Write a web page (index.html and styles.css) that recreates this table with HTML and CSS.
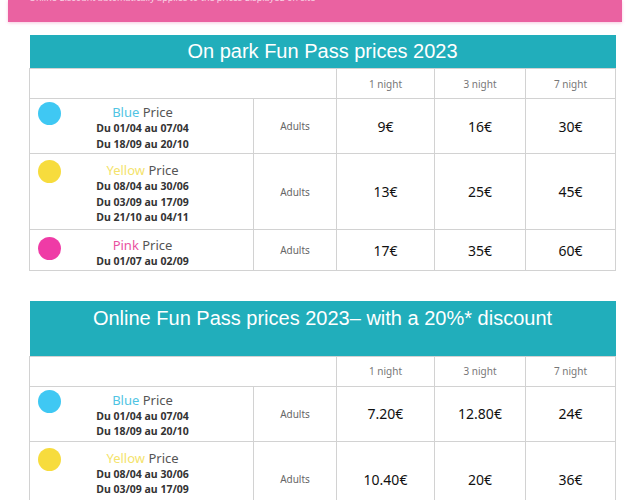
FILE: index.html
```html
<!DOCTYPE html>
<html lang="en">
<head>
<meta charset="utf-8">
<title>Fun Pass prices 2023</title>
<link rel="stylesheet" href="styles.css">
</head>
<body>
<div class="banner"><p class="banner-text">*Online discount automatically applies to the prices displayed on site</p></div>

<table class="prices">
  <colgroup><col class="c1"><col class="c2"><col class="c3"><col class="c4"><col class="c5"></colgroup>
  <tr><th class="title" colspan="5">On park Fun Pass prices 2023</th></tr>
  <tr class="head"><td class="period"></td><td class="who"></td><td>1 night</td><td>3 night</td><td>7 night</td></tr>
  <tr class="r2">
    <td class="period"><div class="pcell"><span class="dot blue"></span><div class="ptext"><div class="pname"><span class="c-blue">Blue</span> Price</div><div class="date">Du 01/04 au 07/04</div><div class="date">Du 18/09 au 20/10</div></div></div></td>
    <td class="who">Adults</td><td class="price">9€</td><td class="price">16€</td><td class="price">30€</td>
  </tr>
  <tr class="r3">
    <td class="period"><div class="pcell"><span class="dot yellow"></span><div class="ptext"><div class="pname"><span class="c-yellow">Yellow</span> Price</div><div class="date">Du 08/04 au 30/06</div><div class="date">Du 03/09 au 17/09</div><div class="date">Du 21/10 au 04/11</div></div></div></td>
    <td class="who">Adults</td><td class="price">13€</td><td class="price">25€</td><td class="price">45€</td>
  </tr>
  <tr class="r1">
    <td class="period"><div class="pcell"><span class="dot pink"></span><div class="ptext"><div class="pname"><span class="c-pink">Pink</span> Price</div><div class="date">Du 01/07 au 02/09</div></div></div></td>
    <td class="who">Adults</td><td class="price">17€</td><td class="price">35€</td><td class="price">60€</td>
  </tr>
</table>

<table class="prices second">
  <colgroup><col class="c1"><col class="c2"><col class="c3"><col class="c4"><col class="c5"></colgroup>
  <tr><th class="title tall" colspan="5">Online Fun Pass prices 2023– with a 20%* discount</th></tr>
  <tr class="head"><td class="period"></td><td class="who"></td><td>1 night</td><td>3 night</td><td>7 night</td></tr>
  <tr class="r2">
    <td class="period"><div class="pcell"><span class="dot blue"></span><div class="ptext"><div class="pname"><span class="c-blue">Blue</span> Price</div><div class="date">Du 01/04 au 07/04</div><div class="date">Du 18/09 au 20/10</div></div></div></td>
    <td class="who">Adults</td><td class="price">7.20€</td><td class="price">12.80€</td><td class="price">24€</td>
  </tr>
  <tr class="r3">
    <td class="period"><div class="pcell"><span class="dot yellow"></span><div class="ptext"><div class="pname"><span class="c-yellow">Yellow</span> Price</div><div class="date">Du 08/04 au 30/06</div><div class="date">Du 03/09 au 17/09</div><div class="date">Du 21/10 au 04/11</div></div></div></td>
    <td class="who">Adults</td><td class="price">10.40€</td><td class="price">20€</td><td class="price">36€</td>
  </tr>
</table>
</body>
</html>
```
FILE: styles.css
```css
html, body { margin: 0; padding: 0; background: #fff; }
body {
  padding: 0 8px;
  font-family: "Noto Sans", "Open Sans", sans-serif;
  color: #222;
  overflow: hidden;
}
.banner {
  height: 22px;
  background: #ea62a1;
  overflow: hidden;
  box-shadow: 0 1px 3px rgba(234, 98, 161, 0.35);
}
.banner-text {
  margin: -7px 0 0 16px;
  font-size: 9px;
  line-height: 10px;
  color: #f8d3e5;
}
.prices {
  border-collapse: collapse;
  margin: 13px 0 0 21px;
  width: 586px;
  table-layout: fixed;
}
.prices.second { margin-top: 30px; }
.c1 { width: 224px; }
.c2 { width: 83px; }
.c3 { width: 98px; }
.c4 { width: 91px; }
.c5 { width: 90px; }
.prices td { border: 1px solid #d2d2d2; padding: 0; }
.title {
  background: #21aebb;
  color: #fff;
  font-family: "Liberation Sans", Arial, sans-serif;
  font-weight: normal;
  font-size: 20px;
  height: 33px;
  padding: 0;
  text-align: center;
  vertical-align: middle;
  white-space: nowrap;
}
.title.tall {
  height: 55px;
  vertical-align: top;
  padding-top: 6px;
  box-sizing: border-box;
}
.head td {
  height: 29px;
  font-size: 10px;
  color: #777;
  text-align: center;
  vertical-align: middle;
}
.head td.period { border-right-color: transparent; }
.prices td:nth-child(n+2) { border-left-color: #bdbdbd; }
.r2 td { height: 54px; }
.r3 td { height: 75px; }
.r1 td { height: 40px; }
.period { vertical-align: top; }
.pcell {
  display: grid;
  grid-template-columns: 32px 1fr 32px;
  padding: 3px 0 0 8px;
}
.r3 .pcell { padding-top: 6px; }
.r1 .pcell { padding-top: 7px; }
.dot {
  width: 23px;
  height: 23px;
  border-radius: 50%;
}
.dot.blue { background: #3fc8f3; }
.dot.yellow { background: #f7dc3d; }
.dot.pink { background: #ef3ba6; }
.ptext { text-align: center; padding-right: 6px; white-space: nowrap; }
.pname {
  font-size: 13px;
  line-height: 17px;
  color: #555;
  padding-top: 2px;
}
.r1 .pname { padding-top: 0; }
.c-blue { color: #4fc4e3; }
.c-yellow { color: #f4e36c; }
.c-pink { color: #e9519f; }
.date {
  font-size: 10.5px;
  font-weight: bold;
  line-height: 15.5px;
  color: #333;
}
.r2 .date:first-of-type { margin-top: 1px; }
.who {
  font-size: 10px;
  color: #666;
  text-align: center;
  vertical-align: middle;
}
.price {
  font-size: 14px;
  color: #111;
  text-align: center;
  vertical-align: middle;
}
```
